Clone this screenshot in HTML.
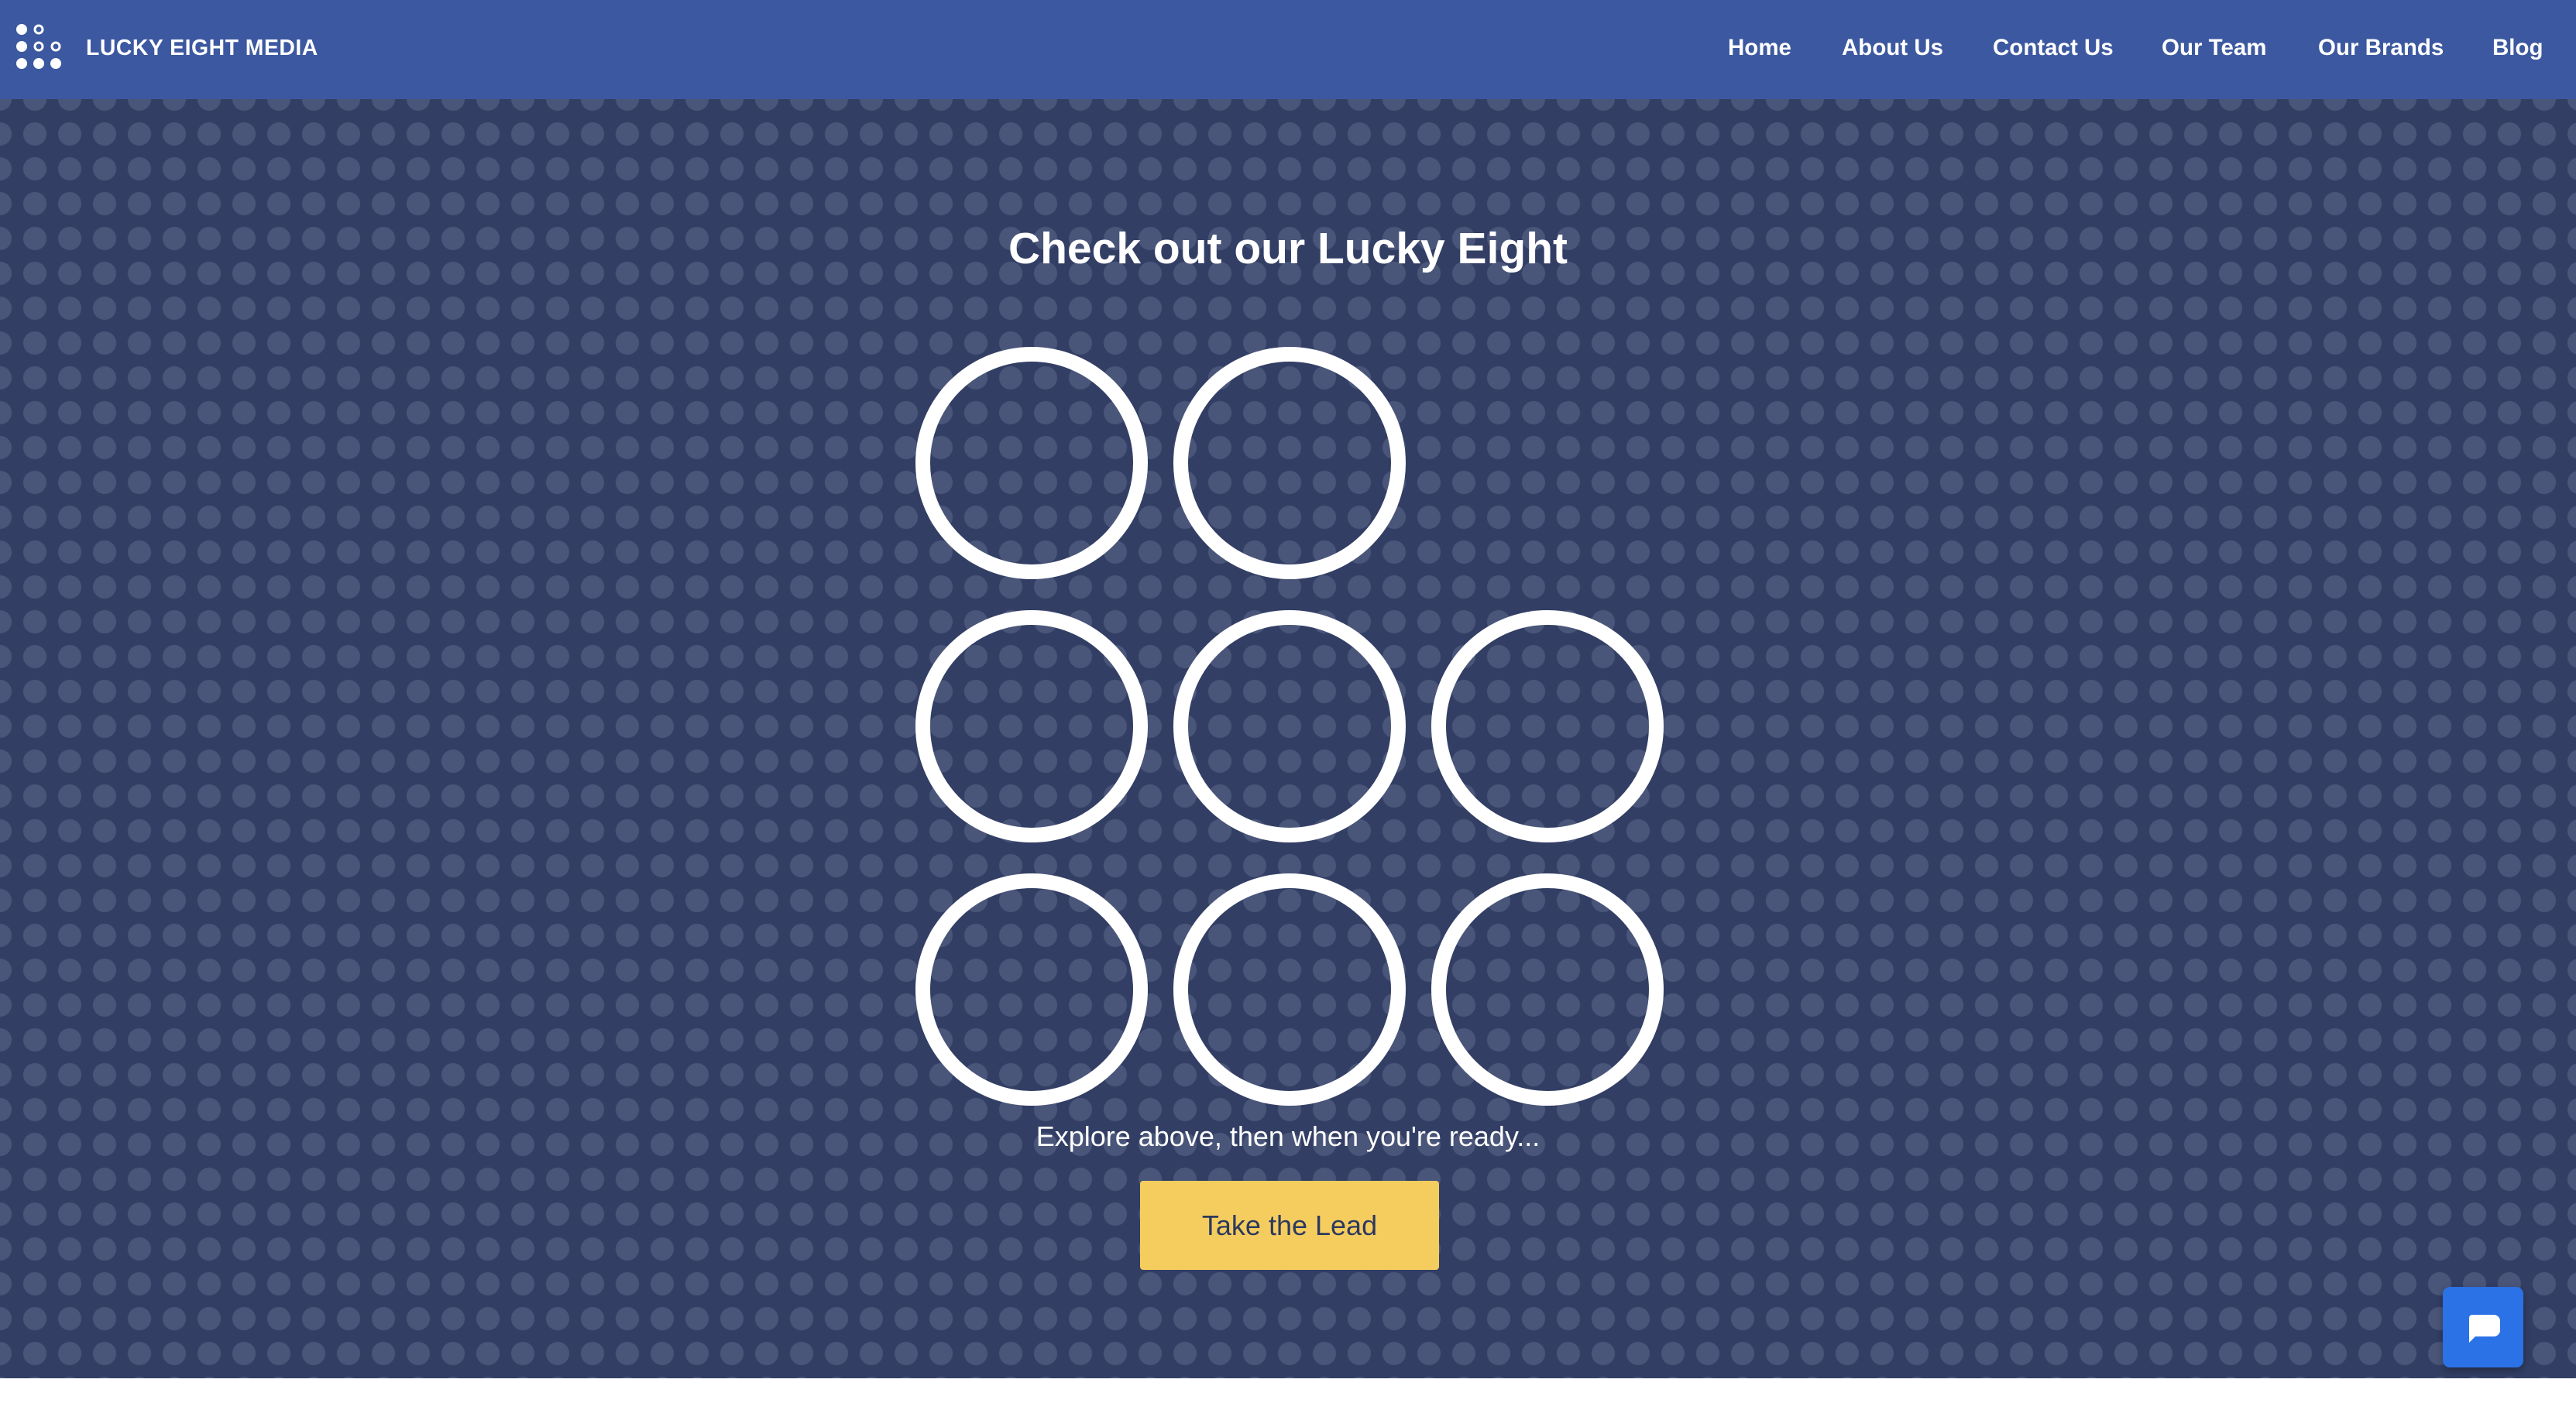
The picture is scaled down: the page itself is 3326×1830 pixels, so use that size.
<!DOCTYPE html>
<html><head><meta charset="utf-8"><style>
*{margin:0;padding:0;box-sizing:border-box}
html,body{width:3326px;height:1830px;background:#fff;overflow:hidden;font-family:"Liberation Sans",sans-serif}
.nav{position:absolute;left:0;top:0;width:3326px;height:128px;background:#3c58a0;color:#fff}
.logo{position:absolute;left:20px;top:30px}
.brand{position:absolute;left:111px;top:46px;font-weight:bold;font-size:28.4px;letter-spacing:0.5px}
.links a{position:absolute;top:45px;font-weight:bold;font-size:29.5px;color:#fff;text-decoration:none}
.hero{position:absolute;left:0;top:128px;width:3326px;height:1652px;background-color:#323e64;
background-image:radial-gradient(circle at 22.5px 22.5px,#4a5679 14.5px,transparent 15.5px);
background-size:45px 45px;background-position:-22.5px -112.5px}
h1{position:absolute;left:0;width:3326px;text-align:center;top:160px;font-size:57px;font-weight:bold;color:#fff}
.ring{position:absolute;width:300px;height:300px;border:19px solid #fff;border-radius:50%}
.explore{position:absolute;left:0;width:3326px;text-align:center;top:1319px;font-size:36px;color:#fff}
.btn{position:absolute;left:1472px;top:1397px;width:386px;height:115px;background:#f5cd5f;border-radius:4px;color:#2d3a5e;font-size:36px;text-align:center;line-height:115px}
.chat{position:absolute;left:3154px;top:1662px;width:104px;height:104px;background:#2b72e6;border-radius:9px;box-shadow:0 4px 10px rgba(0,0,0,.3)}
</style></head><body>
<div class="nav">
<svg class="logo" width="62" height="62" viewBox="0 0 62 62" fill="#fff" stroke="#fff">
<circle cx="8" cy="8" r="6.5"/><circle cx="30" cy="8" r="5" fill="none" stroke-width="3"/>
<circle cx="8" cy="30" r="6.5"/><circle cx="30" cy="30" r="5" fill="none" stroke-width="3"/><circle cx="52" cy="30" r="5" fill="none" stroke-width="3"/>
<circle cx="8" cy="52" r="6.5"/><circle cx="30" cy="52" r="6.5"/><circle cx="52" cy="52" r="6.5"/>
</svg>
<div class="brand">LUCKY EIGHT MEDIA</div>
<div class="links">
<a style="left:2231px">Home</a><a style="left:2378px">About Us</a><a style="left:2573px">Contact Us</a><a style="left:2791px">Our Team</a><a style="left:2993px">Our Brands</a><a style="left:3218px">Blog</a>
</div>
</div>
<div class="hero">
<h1>Check out our Lucky Eight</h1>
<div class="ring" style="left:1182px;top:320px"></div>
<div class="ring" style="left:1515px;top:320px"></div>
<div class="ring" style="left:1182px;top:660px"></div>
<div class="ring" style="left:1515px;top:660px"></div>
<div class="ring" style="left:1848px;top:660px"></div>
<div class="ring" style="left:1182px;top:1000px"></div>
<div class="ring" style="left:1515px;top:1000px"></div>
<div class="ring" style="left:1848px;top:1000px"></div>
<div class="explore">Explore above, then when you're ready...</div>
<div class="btn">Take the Lead</div>
</div>
<div class="chat"><svg width="104" height="104" viewBox="0 0 104 104"><path d="M38 36h28a8 8 0 0 1 8 8v12a8 8 0 0 1-8 8H42l-8 8V40a4 4 0 0 1 4-4z" fill="#fff"/></svg></div>
</body></html>
